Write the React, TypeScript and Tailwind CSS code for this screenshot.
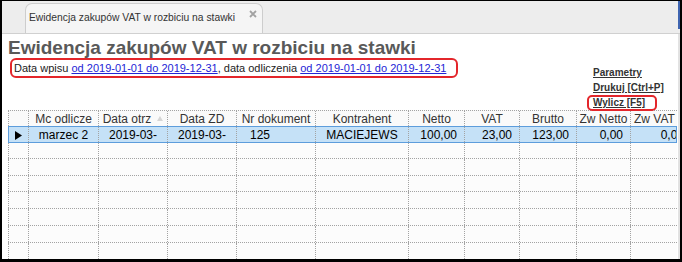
const cols =
  "grid grid-cols-[21px_70px_69px_69px_79px_93px_56px_55px_57px_54px_60px]";
const dot = "border-dotted border-[#a3a3a3]";

const headers = ["", "Mc odlicze", "Data otrz", "Data ZD", "Nr dokument", "Kontrahent", "Netto", "VAT", "Brutto", "Zw Netto", "Zw VAT"];

const emptyRows = ["h-[16px]", "h-[17px]", "h-[16px]", "h-[17px]", "h-[17px]", "h-[17px]", "h-[17px]"];

function Tab() {
  return (
    <div className="flex h-[33px] border-b border-[#d0d0d0] bg-[#ededed]">
      <div className="ml-[23px] mt-[2px] flex h-[30px] w-[238px] items-start rounded-t-[7px] border border-b-0 border-[#cdcdcd] bg-[#f5f5f5] pl-[3px] pt-[7px]">
        <span className="whitespace-nowrap text-[10.3px] leading-[14px] text-[#333]">Ewidencja zakupów VAT w rozbiciu na stawki</span>
        <svg className="ml-auto mr-[5px] mt-[-1px] shrink-0" width="8" height="8" viewBox="0 0 8 8">
          <path d="M1 1 L7 7 M7 1 L1 7" stroke="#a2a2a2" strokeWidth="1.8" />
        </svg>
      </div>
      <div className="ml-auto h-[28px] w-[2px] bg-[#3e64b0]" />
    </div>
  );
}

function Links() {
  return (
    <div className="ml-[129px] mt-[7px] flex flex-col text-[10px] font-bold text-[#333]">
      <span className="h-[15px] pl-[6px] leading-[15px] underline">Parametry</span>
      <span className="h-[15px] pl-[6px] leading-[15px] underline">Drukuj [Ctrl+P]</span>
      <span className="h-[16px] w-[70px] rounded-[5px] border-2 border-[#e3262b] pl-[4px] leading-[12px] underline">Wylicz [F5]</span>
    </div>
  );
}

function Grid() {
  return (
    <div className="ml-[6px] w-[669px] overflow-hidden text-[12px]">
      <div className={`${cols} h-[17px] border-y bg-[#fafafa] ${dot} text-[#333]`}>
        {headers.map((h, i) => (
          <div
            key={i}
            className={`flex items-center overflow-hidden whitespace-nowrap border-r ${dot} ${i === 0 ? "border-l" : ""} ${i === 10 ? "justify-start pl-[3px]" : "justify-center"}`}
          >
            {h}
            {i === 2 && (
              <svg className="ml-[6px]" width="6" height="5" viewBox="0 0 6 5">
                <path d="M0 5 L3 0 L6 5 Z" fill="#d6d6d6" />
              </svg>
            )}
          </div>
        ))}
      </div>

      <div className={`${cols} relative -mt-px h-[17px] bg-[#c5e1f7] text-black`}>
        <div className={`flex items-center justify-center border-r ${dot}`}>
          <svg width="7" height="9" viewBox="0 0 7 9">
            <path d="M0 0 L7 4.5 L0 9 Z" fill="#000" />
          </svg>
        </div>
        <div className={`flex items-center justify-center border-r ${dot}`}>marzec 2</div>
        <div className={`flex items-center justify-center border-r ${dot}`}>2019-03-</div>
        <div className={`flex items-center justify-center border-r ${dot}`}>2019-03-</div>
        <div className={`flex items-center pl-[13px] border-r ${dot}`}>125</div>
        <div className={`flex items-center justify-center border-r ${dot}`}>MACIEJEWS</div>
        <div className={`flex items-center justify-end pr-[7px] border-r ${dot}`}>100,00</div>
        <div className={`flex items-center justify-end pr-[7px] border-r ${dot}`}>23,00</div>
        <div className={`flex items-center justify-end pr-[7px] border-r ${dot}`}>123,00</div>
        <div className={`flex items-center justify-end pr-[7px] border-r ${dot}`}>0,00</div>
        <div className="flex items-center justify-end pr-[7px] whitespace-nowrap">0,00</div>
        <div className="pointer-events-none absolute inset-0 border border-[#5d9ddc]" />
      </div>

      {emptyRows.map((h, r) => (
        <div key={r} className={`${cols} ${h} border-b bg-[#fcfcfc] ${dot}`}>
          {headers.map((_, i) => (
            <div key={i} className={`border-r ${dot} ${i === 0 ? "border-l" : ""}`} />
          ))}
        </div>
      ))}
    </div>
  );
}

export default function App() {
  return (
    <div className="h-[262px] w-[682px] overflow-hidden border-t border-b-[3px] border-x-2 border-black bg-white font-['Liberation_Sans',Arial,sans-serif]">
      <Tab />
      <div className="h-[225px] overflow-hidden border-r-2 border-[#e2e2e2]">
        <h1 className="ml-[6px] mt-[4px] h-[20px] text-[19px] font-bold leading-[20px] text-[#595959]">
          Ewidencja zakupów VAT w rozbiciu na stawki
        </h1>
        <div className="flex h-[52px] items-start">
          <div className="ml-[8px] flex h-[20px] w-[448px] items-center rounded-[6px] border-2 border-[#e3262b] pl-[2px] text-[11px] text-[#222]">
            Data wpisu&nbsp;<span className="text-[#2424d6] underline">od 2019-01-01 do 2019-12-31</span>, data odliczenia&nbsp;
            <span className="text-[#2424d6] underline">od 2019-01-01 do 2019-12-31</span>
          </div>
          <Links />
        </div>
        <Grid />
      </div>
    </div>
  );
}
